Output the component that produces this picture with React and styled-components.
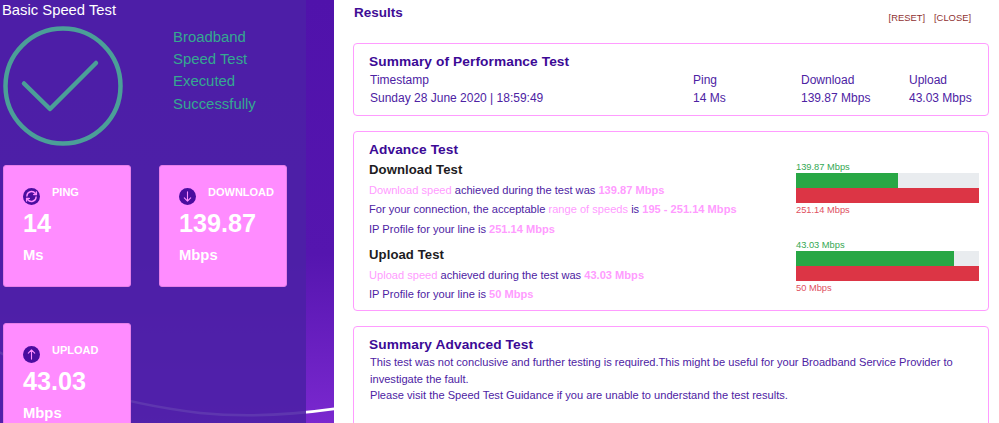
import React from "react";
import styled, { createGlobalStyle } from "styled-components";

const Global = createGlobalStyle`
  html, body { margin: 0; padding: 0; background: #fff; }
  body { font-family: "Liberation Sans", Arial, sans-serif; overflow: hidden; }
`;

const Page = styled.div`
  display: flex;
  width: 999px;
  height: 423px;
  overflow: hidden;
  background: #fff;
`;

const Side = styled.aside`
  position: relative;
  flex: 0 0 334px;
  height: 423px;
  overflow: hidden;
  background: linear-gradient(180deg, #5012ab 0%, #5515af 60%, #7a28cf 100%);
`;

const Wave = styled.svg`
  position: absolute;
  left: 0;
  top: 0;
`;

const SidePanel = styled.div`
  position: relative;
  width: 306px;
  height: 423px;
  box-sizing: border-box;
  padding: 0 0 0 3px;
  background: rgba(76, 32, 166, 0.9);
`;

const SideTitle = styled.h1`
  margin: 0 0 0 -1px;
  height: 26px;
  padding-top: 1px;
  box-sizing: border-box;
  font-size: 14.8px;
  line-height: 18px;
  font-weight: 400;
  color: #fff;
`;

const Hero = styled.div`
  display: flex;
  align-items: flex-start;
  height: 139px;
`;

const HeroText = styled.div`
  margin: 0 0 0 50px;
  font-size: 14.9px;
  line-height: 22.2px;
  color: #35a890;
`;

const CardGrid = styled.div`
  display: grid;
  grid-template-columns: 128px 128px;
  grid-auto-rows: 122px;
  column-gap: 28px;
  row-gap: 36px;
`;

const Card = styled.div`
  box-sizing: border-box;
  padding: 22px 0 0 19px;
  border-radius: 3px;
  background: #ff8cff;
  border: 1px solid #e67fe8;
  color: #fff;
  font-weight: 700;
`;

const CardHead = styled.div`
  display: flex;
  align-items: flex-start;
  gap: 12px;
  height: 21px;
`;

const IconDisc = styled.span`
  display: flex;
  align-items: center;
  justify-content: center;
  flex: 0 0 17px;
  width: 17px;
  height: 17px;
  border-radius: 50%;
  background: #4a0d9f;
`;

const CardLabel = styled.span`
  margin-top: -3px;
  font-size: 11px;
  line-height: 14px;
`;

const CardValue = styled.div`
  font-size: 25.2px;
  line-height: 28px;
`;

const CardUnit = styled.div`
  margin-top: 10px;
  font-size: 14.8px;
  line-height: 17px;
`;

const Main = styled.main`
  flex: 1;
  box-sizing: border-box;
  padding: 0 10px 0 19px;
  color: #4d22a3;
`;

const MainHead = styled.header`
  display: flex;
  justify-content: space-between;
  height: 43px;
`;

const MainTitle = styled.h2`
  margin: 5px 0 0 1px;
  font-size: 13.5px;
  line-height: 15px;
  font-weight: 700;
  color: #3f0d96;
`;

const Links = styled.div`
  display: flex;
  gap: 9px;
  margin: 12px 18px 0 0;
`;

const Link = styled.a`
  font-size: 9.4px;
  line-height: 12px;
  color: #8f3232;
`;

const Box = styled.section`
  box-sizing: border-box;
  height: ${p => p.$h}px;
  margin-bottom: 15px;
  padding: 10px 9px 0 15px;
  border: 1px solid #ff9cff;
  border-radius: 4px;
`;

const BoxTitle = styled.h3`
  margin: 0;
  font-size: 13.7px;
  line-height: 16px;
  font-weight: 700;
  letter-spacing: 0.1px;
  color: #3c0a96;
`;

const SummaryGrid = styled.div`
  display: grid;
  grid-template-columns: 323px 108px 108px 1fr;
  grid-auto-rows: 18px;
  margin-top: 1px;
  padding-left: 1px;
  font-size: 12px;
  line-height: 18px;
`;

const AdvanceBody = styled.div`
  display: flex;
  justify-content: space-between;
`;

const TestColumn = styled.div`
  flex: 1;
`;

const TestTitle = styled.h4`
  margin: ${p => p.$top}px 0 0;
  font-size: 13.1px;
  line-height: 16px;
  font-weight: 700;
  letter-spacing: 0.1px;
  color: #1d1b22;
`;

const TestLine = styled.p`
  margin: 5px 0 0;
  font-size: 11.1px;
  line-height: 14.3px;
`;

const Hl = styled.span`
  color: #ff9cff;
  font-weight: ${p => (p.$bold ? 700 : 400)};
`;

const Meters = styled.div`
  flex: 0 0 183px;
  padding-top: 3px;
`;

const Meter = styled.div`
  margin-bottom: ${p => p.$gap || 0}px;
`;

const MeterLabel = styled.div`
  margin-top: ${p => p.$top || 0}px;
  font-size: 9.3px;
  line-height: 12px;
  color: ${p => p.$color};
`;

const Track = styled.div`
  height: 15px;
  background: #e9ecef;
`;

const Fill = styled.div`
  height: 15px;
  background: ${p => p.$color};
`;

const SummaryText = styled.p`
  margin: 1px 0 0;
  padding-left: 1px;
  font-size: 11.1px;
  line-height: 16.6px;
`;

const Sync = () => (
  <svg width="13" height="13" viewBox="0 0 24 24" fill="none" stroke="#ff8cff" strokeWidth="2.6" strokeLinecap="round" strokeLinejoin="round">
    <path d="M3.5 11a8.5 8.5 0 0 1 15.5-4.5l2 2" />
    <path d="M21 3.5v5h-5" />
    <path d="M20.5 13a8.5 8.5 0 0 1-15.5 4.5l-2-2" />
    <path d="M3 20.5v-5h5" />
  </svg>
);

const Arrow = ({ up }) => (
  <svg width="11" height="11" viewBox="0 0 12 12" fill="none" stroke="#ff8cff" strokeWidth="1.2" strokeLinecap="round" strokeLinejoin="round">
    {up ? <path d="M6 11V1M2.5 4.5 6 1l3.5 3.5" /> : <path d="M6 1v10M2.5 7.5 6 11l3.5-3.5" />}
  </svg>
);

const StatCard = ({ icon, label, value, unit }) => (
  <Card>
    <CardHead>
      <IconDisc>{icon}</IconDisc>
      <CardLabel>{label}</CardLabel>
    </CardHead>
    <CardValue>{value}</CardValue>
    <CardUnit>{unit}</CardUnit>
  </Card>
);

const SpeedMeter = ({ top, bottom, pct, gap }) => (
  <Meter $gap={gap}>
    <MeterLabel $color="#34a853">{top}</MeterLabel>
    <Track>
      <Fill $color="#28a745" style={{ width: `${pct}%` }} />
    </Track>
    <Fill $color="#dc3545" />
    <MeterLabel $top={1} $color="#e0505f">{bottom}</MeterLabel>
  </Meter>
);

export default function App() {
  return (
    <Page>
      <Global />
      <Side>
        <Wave width="334" height="423" viewBox="0 0 334 423" fill="none">
          <path d="M-5 350C50 380 110 402 200 413C250 418 300 414 340 408" stroke="#fff" strokeWidth="2.5" />
        </Wave>
        <SidePanel>
          <SideTitle>Basic Speed Test</SideTitle>
          <Hero>
            <svg width="120" height="120" viewBox="0 0 120 120" fill="none" stroke="#4b9f98" strokeLinecap="round" strokeLinejoin="round">
              <circle cx="60" cy="60" r="57.5" strokeWidth="4.5" />
              <path d="M21 57.5L47 83L93 37" strokeWidth="4.5" />
            </svg>
            <HeroText>
              Broadband<br />Speed Test<br />Executed<br />Successfully
            </HeroText>
          </Hero>
          <CardGrid>
            <StatCard icon={<Sync />} label="PING" value="14" unit="Ms" />
            <StatCard icon={<Arrow />} label="DOWNLOAD" value="139.87" unit="Mbps" />
            <StatCard icon={<Arrow up />} label="UPLOAD" value="43.03" unit="Mbps" />
          </CardGrid>
        </SidePanel>
      </Side>
      <Main>
        <MainHead>
          <MainTitle>Results</MainTitle>
          <Links>
            <Link>[RESET]</Link>
            <Link>[CLOSE]</Link>
          </Links>
        </MainHead>
        <Box $h={73}>
          <BoxTitle>Summary of Performance Test</BoxTitle>
          <SummaryGrid>
            <span>Timestamp</span><span>Ping</span><span>Download</span><span>Upload</span>
            <span>Sunday 28 June 2020 | 18:59:49</span><span>14 Ms</span><span>139.87 Mbps</span><span>43.03 Mbps</span>
          </SummaryGrid>
        </Box>
        <Box $h={180}>
          <BoxTitle>Advance Test</BoxTitle>
          <AdvanceBody>
            <TestColumn>
              <TestTitle $top={4}>Download Test</TestTitle>
              <TestLine><Hl>Download speed</Hl> achieved during the test was <Hl $bold>139.87 Mbps</Hl></TestLine>
              <TestLine>For your connection, the acceptable <Hl>range of speeds</Hl> is <Hl $bold>195 - 251.14 Mbps</Hl></TestLine>
              <TestLine>IP Profile for your line is <Hl $bold>251.14 Mbps</Hl></TestLine>
              <TestTitle $top={11}>Upload Test</TestTitle>
              <TestLine><Hl>Upload speed</Hl> achieved during the test was <Hl $bold>43.03 Mbps</Hl></TestLine>
              <TestLine>IP Profile for your line is <Hl $bold>50 Mbps</Hl></TestLine>
            </TestColumn>
            <Meters>
              <SpeedMeter top="139.87 Mbps" bottom="251.14 Mbps" pct={55.7} gap={23} />
              <SpeedMeter top="43.03 Mbps" bottom="50 Mbps" pct={86.3} />
            </Meters>
          </AdvanceBody>
        </Box>
        <Box $h={120}>
          <BoxTitle>Summary Advanced Test</BoxTitle>
          <SummaryText>
            This test was not conclusive and further testing is required.This might be useful for your Broadband Service Provider to investigate the fault.<br />
            Please visit the Speed Test Guidance if you are unable to understand the test results.
          </SummaryText>
        </Box>
      </Main>
    </Page>
  );
}
